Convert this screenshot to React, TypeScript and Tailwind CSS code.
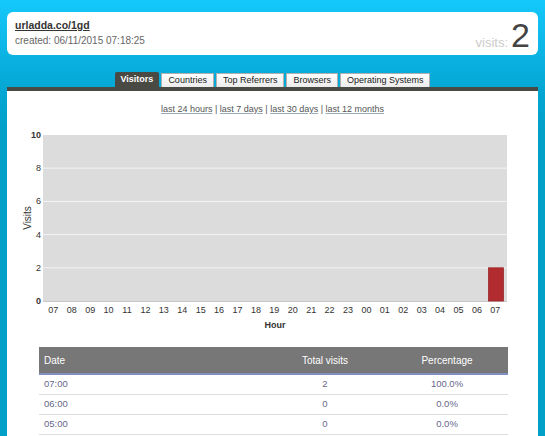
const tabs = ['Visitors', 'Countries', 'Top Referrers', 'Browsers', 'Operating Systems'];

const hours = [
  '07', '08', '09', '10', '11', '12', '13', '14', '15', '16', '17', '18', '19',
  '20', '21', '22', '23', '00', '01', '02', '03', '04', '05', '06', '07',
];

const rows = [
  { date: '07:00', visits: 2, pct: '100.0%' },
  { date: '06:00', visits: 0, pct: '0.0%' },
  { date: '05:00', visits: 0, pct: '0.0%' },
];

// plot area in page coordinates (svg viewBox uses the same)
const PLOT = { left: 43, right: 507, top: 135, bottom: 301 };
const yOf = (v: number) => PLOT.bottom - (v / 10) * (PLOT.bottom - PLOT.top);

function VisitsChart() {
  return (
    <svg width="532" height="225" viewBox="7 115 532 225" className="block">
      <rect
        x={PLOT.left}
        y={PLOT.top}
        width={PLOT.right - PLOT.left}
        height={PLOT.bottom - PLOT.top}
        fill="#dcdcdc"
      />
      {[2, 4, 6, 8].map((v) => (
        <line key={v} x1={PLOT.left} x2={PLOT.right} y1={yOf(v)} y2={yOf(v)} stroke="#f4f4f4" strokeWidth="1" />
      ))}
      <line x1={PLOT.left} x2={PLOT.right} y1={PLOT.bottom + 0.5} y2={PLOT.bottom + 0.5} stroke="#c8c8c8" />

      {/* y axis labels */}
      {[0, 2, 4, 6, 8, 10].map((v) => (
        <text
          key={v}
          x={41}
          y={yOf(v) + 3}
          textAnchor="end"
          fontSize="9"
          fontWeight={v === 0 || v === 10 ? 700 : 400}
          fill="#333"
        >
          {v}
        </text>
      ))}

      {/* x axis labels */}
      {hours.map((h, i) => (
        <text key={i} x={53.3 + i * 18.42} y={313} textAnchor="middle" fontSize="9" fill="#333">
          {h}
        </text>
      ))}

      {/* the only bar */}
      <rect x={488.5} y={yOf(2)} width={15} height={PLOT.bottom - yOf(2)} fill="#b22b2f" stroke="#9a2a2c" strokeWidth="0.8" />

      <text x={275} y={328} textAnchor="middle" fontSize="9" fontWeight={700} fill="#333">
        Hour
      </text>
      <text x={31} y={218} textAnchor="middle" fontSize="10" fill="#333" transform="rotate(-90 31 218)">
        Visits
      </text>
    </svg>
  );
}

export default function App() {
  return (
    <div className="flex min-h-[436px] flex-col bg-[linear-gradient(to_bottom,#15c8fb_0px,#05a6d3_90px,#00a0c9_130px,#00a0c9_100%)] px-[7px] pt-[12px] font-['Liberation_Sans',Arial,sans-serif]">
      {/* header card */}
      <div className="flex h-[43px] items-start justify-between rounded-[6px] bg-white pl-[8px] pr-[8px] pt-[6px]">
        <div>
          <a href="#" className="block text-[10.5px] font-bold leading-[15px] text-[#333] underline">
            urladda.co/1gd
          </a>
          <div className="text-[10px] leading-[15px] text-[#666]">created: 06/11/2015 07:18:25</div>
        </div>
        <div className="flex items-baseline gap-[3px]">
          <span className="text-[13px] text-[#cccccc]">visits:</span>
          <span className="text-[34px] leading-[34px] text-[#444]">2</span>
        </div>
      </div>

      {/* tabs */}
      <div className="mt-[17px] flex items-end justify-center gap-[2px]">
        {tabs.map((t, i) =>
          i === 0 ? (
            <div
              key={t}
              className="flex h-[15px] items-center rounded-t-[2px] bg-[#4a4a44] px-[6px] text-[9px] font-bold text-white"
            >
              {t}
            </div>
          ) : (
            <div
              key={t}
              className="flex h-[14px] items-center border border-b-0 border-[#b0b0b0] bg-[linear-gradient(to_bottom,#ffffff,#ececec)] px-[6px] text-[9px] text-[#222]"
            >
              {t}
            </div>
          ),
        )}
      </div>
      <div className="h-[4px] bg-[#4a4a44]" />

      {/* panel */}
      <div className="flex-1 bg-white">
        <div className="pt-[12px] text-center text-[9px] leading-[12px] text-[#555]">
          <a href="#" className="underline decoration-[#9ab]">last 24 hours</a>
          {' | '}
          <a href="#" className="underline decoration-[#9ab]">last 7 days</a>
          {' | '}
          <a href="#" className="underline decoration-[#9ab]">last 30 days</a>
          {' | '}
          <a href="#" className="underline decoration-[#9ab]">last 12 months</a>
        </div>

        <VisitsChart />

        <table className="ml-[32px] mt-[7px] w-[469px] border-collapse text-left">
          <thead>
            <tr className="h-[27px] border-b-2 border-[#7f8fbf] bg-[#777777] text-[10px] text-white">
              <th className="w-[225px] pl-[5px] font-normal">Date</th>
              <th className="w-[122px] text-center font-normal">Total visits</th>
              <th className="w-[122px] text-center font-normal">Percentage</th>
            </tr>
          </thead>
          <tbody>
            {rows.map((r) => (
              <tr key={r.date} className="h-[20px] border-b border-[#dddddd] text-[9.5px] text-[#66668a]">
                <td className="pl-[5px]">{r.date}</td>
                <td className="text-center">{r.visits}</td>
                <td className="text-center">{r.pct}</td>
              </tr>
            ))}
          </tbody>
        </table>
      </div>
    </div>
  );
}
